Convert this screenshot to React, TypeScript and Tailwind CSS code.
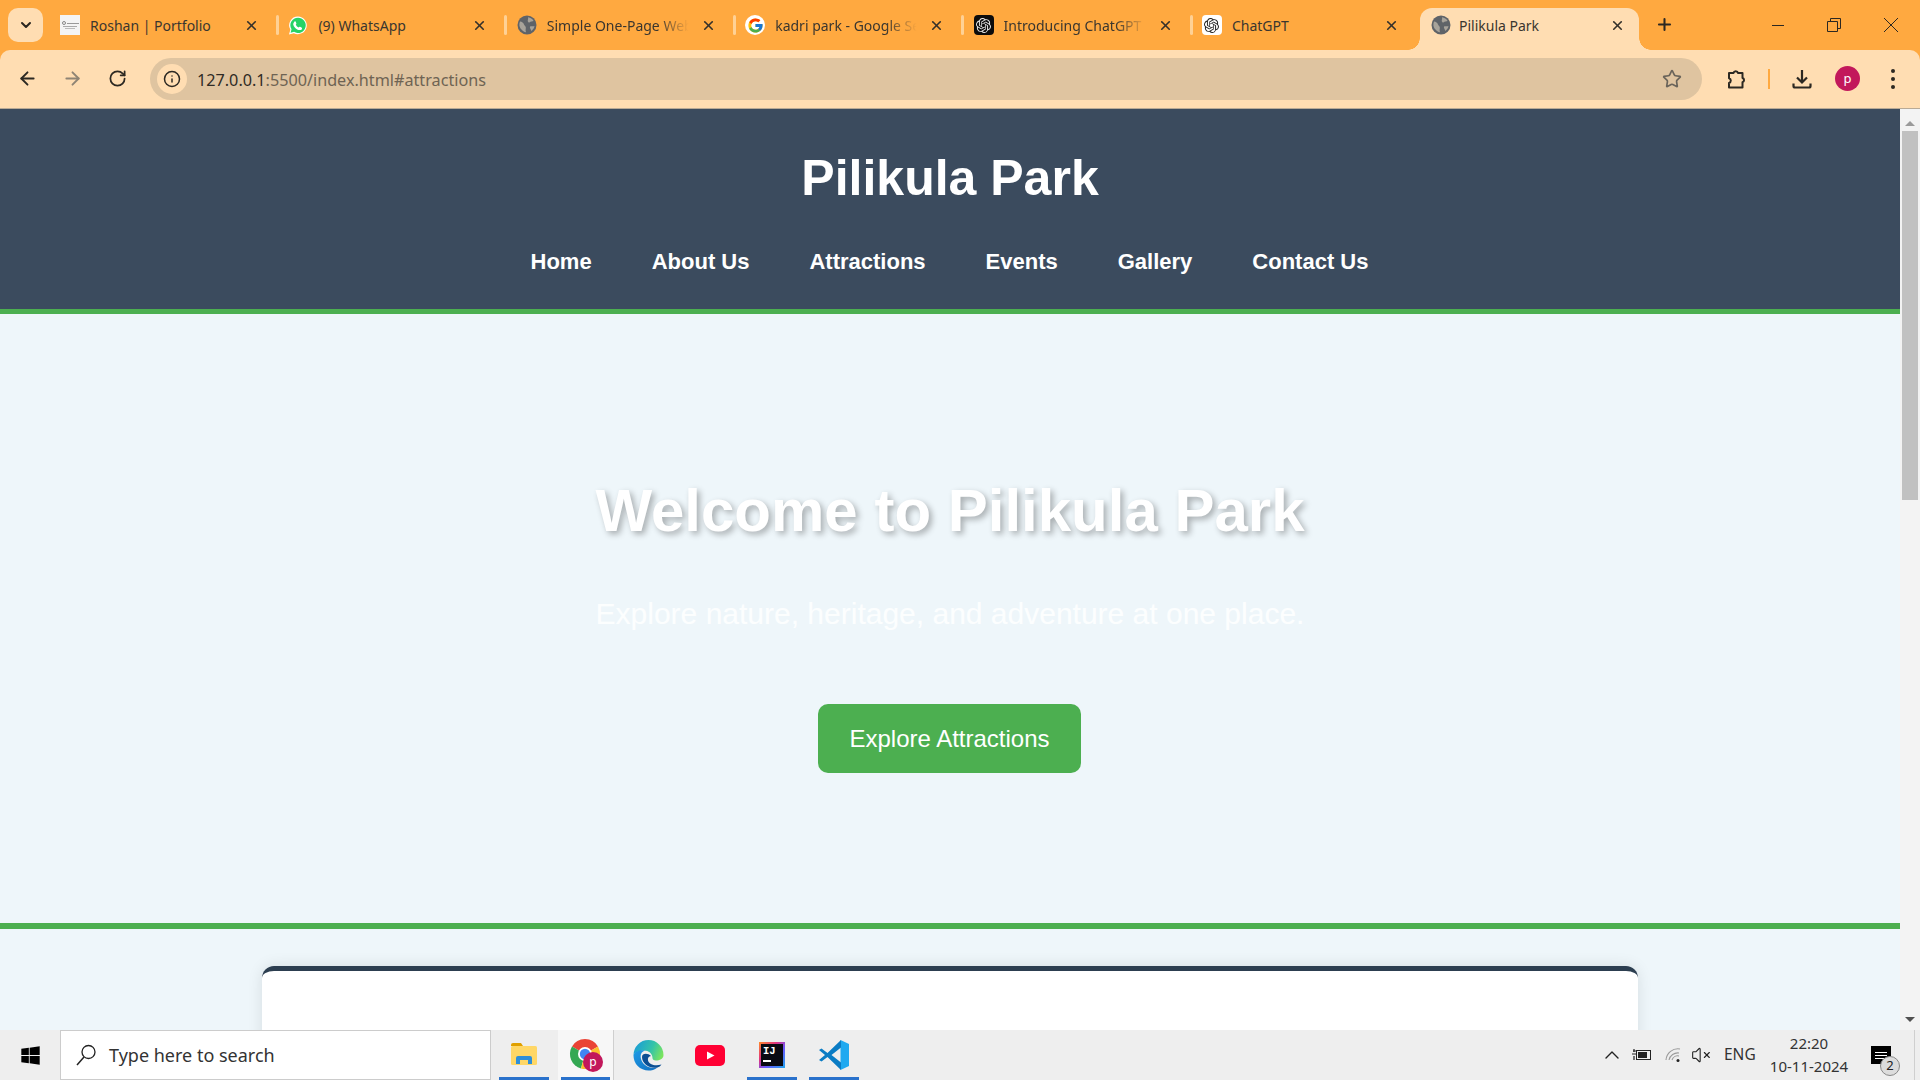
import React from "react";
import { ArrowLeft, ArrowRight, RotateCw, Info, Star, ChevronDown, X, Plus, ChevronUp, VolumeX } from "lucide-react";
import { FaWindows } from "react-icons/fa";
import { FcGoogle } from "react-icons/fc";
import { SiOpenai } from "react-icons/si";

const Globe = () => (
  <svg width="20" height="20" viewBox="0 0 20 20">
    <circle cx="10" cy="10" r="9.5" fill="#5f6368" />
    <path d="M3 6.5c2 .2 3.5 1.2 4 3 .4 1.2 1.6 1.4 1.8 2.8.2 1.4-.6 2.6.2 5-3-.8-6-3.4-6.6-6.8-.2-1.400.1-2.800.6-4z" fill="#a8a39a" />
    <path d="M11 2.300c2.400.3 4.600 1.700 5.600 3.700-1.300.6-2.600.2-3.400 1-.8.9-2 .3-2.400-.8-.3-1.100.7-2.100.2-3.900z" fill="#a8a39a" />
    <path d="M13 11.500c1.500-.5 3 .1 4.500-.4-.3 2-1.500 3.700-3 4.800-.8-1.300-2-3.300-1.500-4.400z" fill="#a8a39a" />
  </svg>
);

const WhatsApp = () => (
  <svg width="21" height="21" viewBox="0 0 21 21">
    <path d="M10.500 1a9.300 9.300 0 0 0-8 14L1 20l5.200-1.400A9.300 9.300 0 1 0 10.500 1z" fill="#fff" />
    <path d="M10.500 2.300a8 8 0 0 0-6.800 12.200l-1 3.600 3.700-1a8 8 0 1 0 4.100-14.800z" fill="#25d366" />
    <path d="M7.500 6c.6 0 1 1.600 1.300 2.300.2.500-.6 1-.6 1.400.6 1.300 1.700 2.300 3 2.900.4 0 .9-.9 1.400-.7.7.3 2.200 1 2.200 1.400 0 1.300-1.200 2.200-2.500 2-3.800-.6-6.400-3.400-6.900-6.500C6.200 7.500 6.500 6 7.500 6z" fill="#fff" />
  </svg>
);

const PortfolioIcon = () => (
  <div className="w-5 h-5 bg-[#f4f4f4] flex flex-col items-center justify-center gap-px">
    <div className="flex items-center gap-px">
      <div className="w-1 h-1 rounded-full border border-[#888]" />
      <div className="w-3 h-px bg-[#999]" />
    </div>
    <div className="w-3.5 h-px bg-[#aaa]" />
    <div className="w-2.5 h-px bg-[#bbb]" />
  </div>
);

const Close = () => <X size={15} strokeWidth={2.6} color="#33302a" className="shrink-0" />;

type TabProps = { icon: React.ReactNode; title: string; fade?: boolean };

const Tab = ({ icon, title, fade }: TabProps) => (
  <div className="w-[228.4px] h-[34px] flex items-center pl-[13px] shrink-0">
    <div className="w-5 h-5 shrink-0 flex items-center justify-center">{icon}</div>
    <span
      className={
        "ml-[10px] w-[154px] shrink-0 overflow-hidden whitespace-nowrap text-[14px] text-[#3a362f] font-['Noto_Sans',sans-serif] " +
        (fade ? "[mask-image:linear-gradient(to_right,black_72%,transparent_92%)]" : "")
      }
    >
      {title}
    </span>
    <Close />
    <div className="ml-[17px] w-[3px] h-5 rounded-sm bg-[#ffd195] shrink-0" />
  </div>
);

const Folder = () => (
  <svg width="28" height="26" viewBox="0 0 28 26">
    <path d="M1 3a2 2 0 0 1 2-2h8l2 3H1z" fill="#e0a000" />
    <rect x="1" y="4" width="26" height="19" rx="1.500" fill="#ffd766" />
    <path d="M6 22v-6a2 2 0 0 1 2-2h12a2 2 0 0 1 2 2v6h-4v-4h-8v4z" fill="#2f8fd8" />
  </svg>
);

const ChromeIcon = () => (
  <svg width="36" height="36" viewBox="0 0 36 36">
    <path d="M17 17 L4 9.500 A15 15 0 0 1 30 9.500 z" fill="#ea4335" />
    <path d="M17 17 L4 9.500 A15 15 0 0 0 13 31.500 z" fill="#34a853" />
    <path d="M17 17 L30 9.500 A15 15 0 0 1 13 31.500 z" fill="#fbc02d" />
    <circle cx="17" cy="17" r="7" fill="#fff" />
    <circle cx="17" cy="17" r="5.200" fill="#4285f4" />
    <circle cx="25" cy="25" r="10" fill="#c2185b" />
    <text x="25" y="29" textAnchor="middle" fontSize="12" fill="#fff" fontFamily="'Noto Sans',sans-serif">p</text>
  </svg>
);

const EdgeIcon = () => (
  <svg width="31" height="31" viewBox="0 0 31 31">
    <defs>
      <linearGradient id="edgeTop" x1="0" y1="0.300" x2="1" y2="0.600">
        <stop offset="0" stopColor="#1a9cd8" />
        <stop offset="0.6" stopColor="#35c4a8" />
        <stop offset="1" stopColor="#7ae45e" />
      </linearGradient>
      <linearGradient id="edgeLow" x1="0" y1="0" x2="0.800" y2="1">
        <stop offset="0" stopColor="#1f9be6" />
        <stop offset="1" stopColor="#1474c4" />
      </linearGradient>
    </defs>
    <path d="M.5 15A15 15 0 0 1 30.500 15C30.500 19 26.500 20.500 23 20.500C20.500 20.500 19.500 19.500 19.500 18C19.500 13 15 10 10 10.500C5 11 1.500 13 .5 15z" fill="url(#edgeTop)" />
    <path d="M.5 15C2 11 7 9.500 12 10.500C8 12 7 15 8 19C9.500 25 16 29 24.500 27.500C21.500 30 18.500 30.500 15.500 30.500A15 15 0 0 1 .5 15z" fill="url(#edgeLow)" />
    <path d="M9 17C9 24 17 29 24.500 27.500C26 27 27.500 26 28.500 24.500C22 26.500 16 24.500 15 20.500C14.500 18 15.500 16.500 18 16C15 13 9 13 9 17z" fill="#0b4f94" />
  </svg>
);

const YouTubeIcon = () => (
  <svg width="30" height="21" viewBox="0 0 30 21">
    <rect width="30" height="21" rx="5" fill="#ff0033" />
    <path d="M12 6.500l7.500 4-7.500 4z" fill="#fff" />
  </svg>
);

const IntellijIcon = () => (
  <div className="w-[26px] h-[26px] p-[2px] bg-[linear-gradient(135deg,#ff8a2a,#e0337f_35%,#6b57ff_60%,#1fa7ef)]">
    <div className="w-full h-full bg-[#0a0a12] flex flex-col pl-[2px] pt-[1px]">
      <span className="text-[10.500px] leading-[12px] font-bold text-white font-['Liberation_Mono',monospace]">IJ</span>
      <div className="mt-[3px] w-[8px] h-[2px] bg-white" />
    </div>
  </div>
);

const VSCodeIcon = () => (
  <svg width="32" height="32" viewBox="0 0 32 32">
    <path d="M22.500 1 L31 5 V27 L22.500 31 L22.500 1z" fill="#1fa9f0" />
    <path d="M23 1 L9.500 14 L3.500 9.500 L1 11 L7 16 L1 21 L3.500 22.500 L9.500 18 L23 31 V23.500 L13.500 16 L23 8.500z" fill="#0a7cc4" />
  </svg>
);

const Slot = ({ children, active, line = true }: { children: React.ReactNode; active?: boolean; line?: boolean }) => (
  <div className={"relative w-14 h-[50px] flex items-center justify-center " + (active ? "bg-[#f7f7f7] border-r border-[#cfcfcf]" : "")}>
    {children}
    {line ? <div className="absolute bottom-0 left-[3px] right-[3px] h-[3px] bg-[#2a72cc]" /> : null}
  </div>
);

export default function App() {
  return (
    <div className="w-[1920px] h-[1080px] overflow-hidden flex flex-col bg-[#ffa940] font-['Liberation_Sans',Arial,sans-serif]">
      {/* tab strip */}
      <div className="h-[50px] shrink-0 flex items-start pt-2">
        <div className="ml-2 w-[35px] h-[34px] rounded-[10px] bg-[#ffddb2] flex items-center justify-center shrink-0">
          <ChevronDown size={16} strokeWidth={3} color="#2a2620" />
        </div>
        <div className="ml-[4px] flex">
          <Tab icon={<PortfolioIcon />} title="Roshan | Portfolio" />
          <Tab icon={<WhatsApp />} title="(9) WhatsApp" />
          <Tab icon={<Globe />} title="Simple One-Page Website" fade />
          <Tab icon={<div className="w-5 h-5 rounded-full bg-white flex items-center justify-center"><FcGoogle size={17} /></div>} title="kadri park - Google Search" fade />
          <Tab icon={<div className="w-5 h-5 rounded bg-[#0c0c0c] flex items-center justify-center"><SiOpenai size={15} color="#e8e8e8" /></div>} title="Introducing ChatGPT" fade />
          <div className="w-[231px] h-[34px] flex items-center pl-[13px] shrink-0">
            <div className="w-5 h-5 rounded bg-white flex items-center justify-center shrink-0"><SiOpenai size={15} color="#222" /></div>
            <span className="ml-[10px] w-[152px] text-[14px] text-[#3a362f] font-['Noto_Sans',sans-serif]">ChatGPT</span>
            <Close />
          </div>
        </div>
        <div className="relative w-[219px] h-[42px] rounded-t-[12px] bg-[#ffddb2] flex items-center pl-[11px] pb-2 shrink-0">
          <div className="absolute bottom-0 -left-3 w-3 h-3 bg-[radial-gradient(circle_at_0_0,transparent_11.500px,#ffddb2_12px)]" />
          <div className="absolute bottom-0 -right-3 w-3 h-3 bg-[radial-gradient(circle_at_100%_0,transparent_11.500px,#ffddb2_12px)]" />
          <Globe />
          <span className="ml-[8px] w-[151px] text-[14px] text-[#3a362f] font-['Noto_Sans',sans-serif]">Pilikula Park</span>
          <Close />
        </div>
        <Plus size={19} strokeWidth={2.6} color="#2c2822" className="ml-[16px] mt-[7px] shrink-0" />
        <div className="flex-1" />
        <svg width="14" height="14" viewBox="0 0 14 14" className="mt-[10px] shrink-0"><path d="M1 7.500h12" stroke="#2c2822" strokeWidth="1" /></svg>
        <svg width="14" height="14" viewBox="0 0 14 14" className="ml-[42px] mt-[10px] shrink-0">
          <path d="M.5 3.500h10v10H.5z M3.500 3.500v-3h10v10h-3" fill="none" stroke="#2c2822" strokeWidth="1" />
        </svg>
        <svg width="16" height="16" viewBox="0 0 16 16" className="ml-[42px] mr-[21px] mt-[9px] shrink-0">
          <path d="M1 1l14 14M15 1L1 15" stroke="#2c2822" strokeWidth="1" />
        </svg>
      </div>

      {/* toolbar */}
      <div className="h-[59px] shrink-0 rounded-t-[10px] bg-[#ffddb2] border-b border-[#b9aa96] flex items-center pb-[1px]">
        <ArrowLeft size={21} strokeWidth={2.2} color="#2c2822" className="ml-[17px] shrink-0" />
        <ArrowRight size={21} strokeWidth={2.2} color="#8f8474" className="ml-[24px] shrink-0" />
        <RotateCw size={19} strokeWidth={2.2} color="#2c2822" className="ml-[25px] shrink-0" />
        <div className="ml-[23px] w-[1552px] h-[42px] rounded-full bg-[#dfc4a0] flex items-center pl-[7px] pr-[20px] shrink-0">
          <div className="w-[30px] h-[30px] rounded-full bg-[#ffddb2] flex items-center justify-center shrink-0">
            <Info size={18} strokeWidth={2} color="#2c2822" />
          </div>
          <span className="ml-[10px] mt-[4px] text-[16.200px] text-[#6e6353] font-['Noto_Sans',sans-serif]">
            <span className="text-[#2f2b25]">127.0.0.1</span>:5500/index.html#attractions
          </span>
          <div className="flex-1" />
          <Star size={20} strokeWidth={2} color="#6a645a" className="shrink-0" />
        </div>
        <svg width="24" height="24" viewBox="0 0 24 24" className="ml-[22px] shrink-0">
          <path d="M5 6h4.500a2.300 2.300 0 0 1 4.500 0H18.500v5a2.200 2.200 0 0 1 0 4.200V20.500H5v-4.500a2.500 2.500 0 0 0 0-4.800z" fill="none" stroke="#2c2822" strokeWidth="2" strokeLinejoin="round" />
        </svg>
        <div className="ml-[20px] w-[2px] h-5 bg-[#ffa940] shrink-0" />
        <svg width="24" height="24" viewBox="0 0 24 24" className="ml-[20px] shrink-0">
          <path d="M12 3v12M7 10.500l5 5 5-5M3.500 16.500v2.500a1.500 1.500 0 0 0 1.500 1.500h14a1.500 1.500 0 0 0 1.500-1.500v-2.500" fill="none" stroke="#2c2822" strokeWidth="2.200" />
        </svg>
        <div className="ml-[21px] w-[25px] h-[25px] rounded-full bg-[#c2185b] flex items-center justify-center text-white text-[13px] font-['Noto_Sans',sans-serif] shrink-0">p</div>
        <div className="ml-[31px] flex flex-col gap-[4px] shrink-0">
          <div className="w-1 h-1 rounded-full bg-[#2c2822]" />
          <div className="w-1 h-1 rounded-full bg-[#2c2822]" />
          <div className="w-1 h-1 rounded-full bg-[#2c2822]" />
        </div>
      </div>

      {/* page + scrollbar */}
      <div className="flex-1 min-h-0 flex bg-[#eef6fa]">
        <div className="w-[1900px] shrink-0 overflow-hidden">
          <header className="h-[205px] bg-[#3b4b5e] border-b-[5px] border-[#4caf50] flex flex-col items-center text-white">
            <h1 className="mt-[42px] text-[50px] leading-[55px] font-bold">Pilikula Park</h1>
            <nav className="mt-[43px] mr-[1px] flex gap-[60px] text-[22px] leading-[26px] font-bold">
              <span>Home</span>
              <span>About Us</span>
              <span>Attractions</span>
              <span>Events</span>
              <span>Gallery</span>
              <span>Contact Us</span>
            </nav>
          </header>
          <section className="h-[615px] border-b-[6px] border-[#4caf50] flex flex-col items-center text-white">
            <h2 className="mt-[164px] text-[60px] leading-[66px] font-bold [text-shadow:3px_3px_6px_rgba(0,0,0,0.3)]">Welcome to Pilikula Park</h2>
            <p className="mt-[53px] text-[30px] leading-[34px] text-white/85">Explore nature, heritage, and adventure at one place.</p>
            <div className="mt-[73px] mr-[1px] w-[263px] h-[69px] rounded-[10px] bg-[#4caf50] flex items-center justify-center text-[24px]">Explore Attractions</div>
          </section>
          <div className="mt-[37px] mx-auto w-[1376px] h-[120px] rounded-t-[12px] border-t-[5px] border-[#2c3e50] bg-white shadow-[0_0_15px_rgba(0,0,0,0.1)]" />
        </div>
        <div className="w-5 shrink-0 bg-[#f3f3f3] flex flex-col items-center pt-[12px]">
          <div className="w-0 h-0 border-x-[5px] border-x-transparent border-b-[5px] border-b-[#9a9a9a]" />
          <div className="mt-[5px] w-4 h-[369px] bg-[#c1c1c1]" />
          <div className="flex-1" />
          <div className="mb-[8px] w-0 h-0 border-x-[5px] border-x-transparent border-t-[5px] border-t-[#505050]" />
        </div>
      </div>

      {/* taskbar */}
      <div className="h-[50px] shrink-0 bg-[#eeeeee] flex items-center">
        <div className="w-[60px] flex justify-center shrink-0"><FaWindows size={21} color="#000" /></div>
        <div className="w-[431px] h-[50px] bg-white border border-[#cccccc] flex items-center pl-[13px] shrink-0">
          <svg width="24" height="24" viewBox="0 0 24 24" className="shrink-0">
            <circle cx="14.500" cy="9" r="6.500" fill="none" stroke="#222" strokeWidth="1.300" />
            <path d="M10 14L3 22" stroke="#222" strokeWidth="1.500" />
          </svg>
          <span className="ml-[11px] text-[18px] text-[#333] font-['Noto_Sans',sans-serif]">Type here to search</span>
        </div>
        <div className="ml-[5px] flex gap-[6px] shrink-0">
          <Slot><Folder /></Slot>
          <Slot active><ChromeIcon /></Slot>
          <Slot line={false}><EdgeIcon /></Slot>
          <Slot line={false}><YouTubeIcon /></Slot>
          <Slot><IntellijIcon /></Slot>
          <Slot><VSCodeIcon /></Slot>
        </div>
        <div className="flex-1" />
        <ChevronUp size={24} strokeWidth={1.400} color="#222" className="shrink-0" />
        <svg width="20" height="14" viewBox="0 0 20 14" className="ml-[8px] shrink-0">
          <path d="M0 6h4M2 1v3M1 3h3M2 8v4" stroke="#222" strokeWidth="1.200" fill="none" />
          <rect x="4.500" y="2.500" width="14" height="9" fill="none" stroke="#222" />
          <rect x="6" y="4" width="9" height="6" fill="#222" />
        </svg>
        <svg width="18" height="18" viewBox="0 0 18 18" className="ml-[13px] shrink-0">
          <path d="M1 14A12 12 0 0 1 15 3M4 14a9 9 0 0 1 10-7M7 14a6 6 0 0 1 7-4" fill="none" stroke="#9a9a9a" strokeWidth="1.100" />
          <circle cx="13" cy="14.500" r="1.500" fill="#222" />
        </svg>
        <VolumeX size={20} strokeWidth={1.300} color="#222" className="ml-[8px] shrink-0" />
        <span className="ml-[13px] w-[30px] text-[15.500px] text-[#333] font-['Noto_Sans',sans-serif] shrink-0">ENG</span>
        <div className="ml-[9px] w-[92px] flex flex-col items-center text-[15px] leading-[23px] text-[#333] font-['Noto_Sans',sans-serif] shrink-0">
          <span>22:20</span>
          <span>10-11-2024</span>
        </div>
        <div className="relative ml-[16px] mr-[23px] w-[20px] h-[18px] bg-black shrink-0 flex flex-col items-center justify-center gap-[2px]">
          <div className="w-3 h-px bg-white" />
          <div className="w-3 h-px bg-white" />
          <div className="w-3 h-px bg-white" />
          <div className="absolute -right-[9px] -bottom-[12px] w-[20px] h-[20px] rounded-full bg-[#dcdcdc] border border-[#888] flex items-center justify-center text-[13px] text-[#222] font-['Noto_Sans',sans-serif]">2</div>
        </div>
        <div className="w-px h-full bg-[#cfcfcf] mr-[5px] shrink-0" />
      </div>
    </div>
  );
}
